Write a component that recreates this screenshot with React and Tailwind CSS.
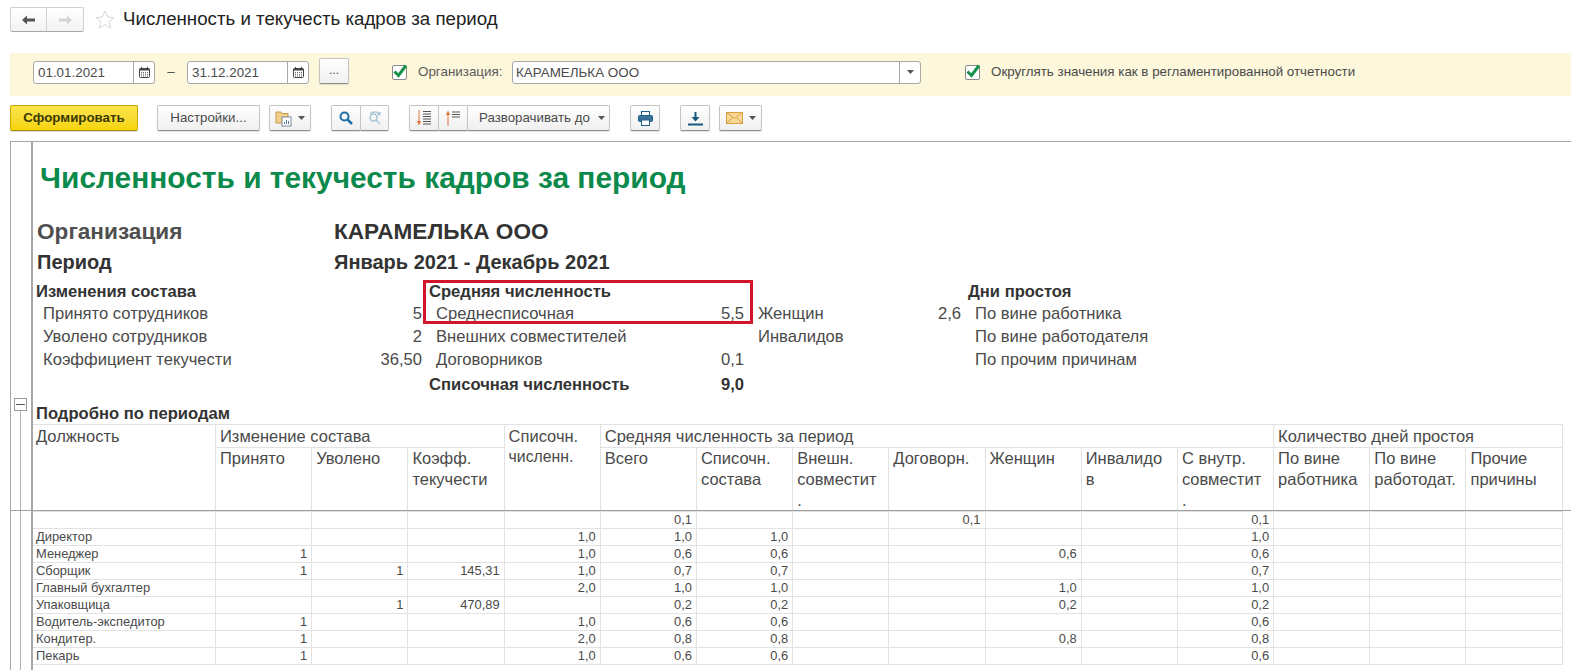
const FONT = "font-['Liberation_Sans',Arial,sans-serif]";

function Btn({ className = "", children }) {
  return (
    <div className={"flex items-center justify-center h-[26px] rounded-[2px] border border-[#c4c4c4] border-b-[#8f8f8f] bg-gradient-to-b from-white to-[#f0f0f0] shadow-[0_1px_1px_rgba(0,0,0,0.12)] text-[#4a4a4a] " + className}>
      {children}
    </div>
  );
}

const Caret = ({ className = "" }) => (
  <svg width="7" height="4" viewBox="0 0 7 4" className={className}><path d="M0 0h7L3.5 4z" fill="#555" /></svg>
);

const Cal = () => (
  <svg width="11" height="11" viewBox="0 0 11 11">
    <rect x="0.5" y="1.5" width="10" height="9" rx="1" fill="#fff" stroke="#444" />
    <rect x="0.5" y="1.5" width="10" height="2" fill="#444" />
    <path d="M2.5 0v2M8.5 0v2" stroke="#444" />
    <path d="M2 5.5h7M2 7.3h7M2 9h7" stroke="#666" strokeDasharray="1 1" />
  </svg>
);

const Check = () => (
  <div className="relative w-[15px] h-[15px] border border-[#8a8a8a] rounded-[2px] bg-white shrink-0">
    <svg width="17" height="16" viewBox="0 0 17 16" className="absolute left-[-1px] top-[-3px]">
      <path d="M2.5 8.5l4 4L14 2.5" fill="none" stroke="#16924a" strokeWidth="3" />
    </svg>
  </div>
);

function DateInput({ value }) {
  return (
    <div className="flex w-[122px] h-[23px] rounded-[3px] border border-[#a8a8a8] bg-white">
      <div className="flex-1 pl-[4px] text-[13.4px] leading-[21px] text-[#4a4a4a]">{value}</div>
      <div className="w-[21px] border-l border-[#a8a8a8] flex items-center justify-center"><Cal /></div>
    </div>
  );
}

const COLS = [182.5, 96.2, 96.2, 96.2, 96.2, 96.2, 96.2, 96.2, 96.2, 96.2, 96.2, 96.2, 96.2, 96.2, 96.2];

const ROWS = [
  ["", "", "", "", "", "0,1", "", "", "0,1", "", "", "0,1", "", "", ""],
  ["Директор", "", "", "", "1,0", "1,0", "1,0", "", "", "", "", "1,0", "", "", ""],
  ["Менеджер", "1", "", "", "1,0", "0,6", "0,6", "", "", "0,6", "", "0,6", "", "", ""],
  ["Сборщик", "1", "1", "145,31", "1,0", "0,7", "0,7", "", "", "", "", "0,7", "", "", ""],
  ["Главный бухгалтер", "", "", "", "2,0", "1,0", "1,0", "", "", "1,0", "", "1,0", "", "", ""],
  ["Упаковщица", "", "1", "470,89", "", "0,2", "0,2", "", "", "0,2", "", "0,2", "", "", ""],
  ["Водитель-экспедитор", "1", "", "", "1,0", "0,6", "0,6", "", "", "", "", "0,6", "", "", ""],
  ["Кондитер.", "1", "", "", "2,0", "0,8", "0,8", "", "", "0,8", "", "0,8", "", "", ""],
  ["Пекарь", "1", "", "", "1,0", "0,6", "0,6", "", "", "", "", "0,6", "", "", ""],
];

const H = "border border-[#e2e2e2] align-top text-left font-normal pl-[4px] pt-[1px] text-[16.5px] leading-[20px] text-[#4a4a4a]";
const H2 = "border border-[#e2e2e2] align-top text-left font-normal pl-[4px] pt-0 text-[16.5px] leading-[21px] text-[#4a4a4a]";

function SumRow({ a, an, b, bn, c, cn, d, bold, className = "" }) {
  return (
    <div className={"flex h-[23px] items-center text-[16.6px] text-[#4a4a4a] " + className}>
      <div className="w-[386px] flex justify-between pl-[7px]"><span>{a}</span><span>{an}</span></div>
      <div className={"w-[315px] ml-[7px] flex justify-between " + (bold ? "font-bold text-[#333]" : "pl-[7px]")}><span>{b}</span><span>{bn}</span></div>
      <div className="w-[203px] ml-[14px] flex justify-between"><span>{c}</span><span>{cn}</span></div>
      <div className="ml-[14px]">{d}</div>
    </div>
  );
}

export default function App() {
  return (
    <div className={FONT + " relative h-[670px] w-[1571px] overflow-hidden bg-white"}>
      {/* Title row */}
      <div className="flex items-center h-[25px] mt-[7px] ml-[10px]">
        <div className="flex w-[74px] h-[25px] rounded-[2px] border border-[#d0d0d0] border-b-[#a8a8a8] bg-gradient-to-b from-white to-[#f3f3f3]">
          <div className="w-[37px] flex items-center justify-center border-r border-[#d0d0d0]">
            <svg width="13" height="10" viewBox="0 0 13 10"><path d="M0 5l5-4.5V3.5h8v3H5v3z" fill="#555" /></svg>
          </div>
          <div className="w-[37px] flex items-center justify-center">
            <svg width="13" height="10" viewBox="0 0 13 10"><path d="M13 5L8 .5V3.5H0v3h8v3z" fill="#d4d4d4" /></svg>
          </div>
        </div>
        <svg width="20" height="19" viewBox="0 0 20 19" className="ml-[11px]">
          <path d="M10 1l2.7 6 6.3.6-4.8 4.2 1.500 6.200L10 14.7 4.3 18l1.500-6.200L1 7.600l6.300-.6z" fill="#fff" stroke="#d8d8d8" />
        </svg>
        <div className="ml-[8px] text-[18.7px] text-[#222]">Численность и текучесть кадров за период</div>
      </div>

      {/* Filter bar */}
      <div className="flex items-center h-[43px] mt-[21px] ml-[10px] pb-[5px] bg-[#fdf8dc] text-[13.4px] text-[#4a4a4a]">
        <div className="ml-[23px]"><DateInput value="01.01.2021" /></div>
        <div className="w-[32px] text-center">–</div>
        <DateInput value="31.12.2021" />
        <Btn className="ml-[10px] mb-[2px] w-[30px] text-[12px] pb-[2px]">...</Btn>
        <div className="ml-[43px]"><Check /></div>
        <div className="ml-[11px] w-[94px] text-[#5a5a5a]">Организация:</div>
        <div className="flex w-[409px] h-[23px] rounded-[3px] border border-[#a8a8a8] bg-white">
          <div className="flex-1 pl-[3px] leading-[21px]">КАРАМЕЛЬКА ООО</div>
          <div className="w-[21px] border-l border-[#a8a8a8] flex items-center justify-center"><Caret /></div>
        </div>
        <div className="ml-[44px]"><Check /></div>
        <div className="ml-[11px] text-[13.35px]">Округлять значения как в регламентированной отчетности</div>
      </div>

      {/* Toolbar */}
      <div className="flex items-center mt-[9px] ml-[10px] text-[13.3px]">
        <div className="flex items-center justify-center w-[128px] h-[26px] rounded-[2px] border border-[#c9a800] border-b-[#a88c00] bg-gradient-to-b from-[#fbe44a] to-[#f7d400] font-bold text-[#3a3a00] shadow-[0_1px_1px_rgba(0,0,0,0.15)]">Сформировать</div>
        <Btn className="ml-[19px] w-[103px]">Настройки...</Btn>
        <Btn className="ml-[9px] w-[42px] gap-[6px]">
          <svg width="17" height="18" viewBox="0 0 17 18">
            <path d="M1 3h5l1 1.500h6V14H1z" fill="#f3cf8a" stroke="#c8964a" />
            <rect x="7" y="8" width="9" height="9" fill="#fff" stroke="#7a8a9a" />
            <path d="M9.500 15v-2M11.500 15v-4M13.500 15v-3" stroke="#4a78a8" />
          </svg>
          <Caret />
        </Btn>
        <div className="ml-[20px] flex">
          <Btn className="w-[30px]">
            <svg width="14" height="14" viewBox="0 0 14 14"><circle cx="5.500" cy="5.500" r="4" fill="none" stroke="#1f6fa8" strokeWidth="2" /><path d="M8.500 8.500L13 13" stroke="#1f6fa8" strokeWidth="2.500" /></svg>
          </Btn>
          <Btn className="w-[29px] -ml-px">
            <svg width="14" height="14" viewBox="0 0 14 14"><circle cx="5.500" cy="6.500" r="3.500" fill="none" stroke="#a8c4d4" strokeWidth="1.500" /><path d="M8 9l4 4M2 2.500C5 .5 9 .5 12 3M12 1v2.500H9.500" fill="none" stroke="#a8c4d4" strokeWidth="1.300" /></svg>
          </Btn>
        </div>
        <div className="ml-[20px] flex">
          <Btn className="w-[30px]">
            <svg width="16" height="16" viewBox="0 0 16 16">
              <path d="M3 0v13" stroke="#e0783c" /><path d="M.8 11L3 15.500 5.200 11z" fill="#e0783c" />
              <path d="M7 1.500h8M7 4h8M7 6.500h8M7 9h8M7 11.500h8M7 14h8" stroke="#555" />
            </svg>
          </Btn>
          <Btn className="w-[30px] -ml-px">
            <svg width="16" height="16" viewBox="0 0 16 16">
              <path d="M3 3v13" stroke="#e0783c" /><path d="M.8 5L3 .5 5.200 5z" fill="#e0783c" />
              <path d="M7 2h8M7 4.500h8M7 7h8" stroke="#555" />
            </svg>
          </Btn>
          <Btn className="w-[143px] -ml-px !justify-start pl-[11px] gap-[8px]"><span>Разворачивать до</span><Caret /></Btn>
        </div>
        <Btn className="ml-[20px] w-[30px]">
          <svg width="15" height="15" viewBox="0 0 15 15">
            <rect x="3.500" y="0.500" width="8" height="4" fill="#fff" stroke="#1f5f88" />
            <rect x="0.500" y="4.500" width="14" height="6" rx="1" fill="#3a7398" stroke="#1f5f88" />
            <rect x="3.500" y="9" width="8" height="5.500" fill="#fff" stroke="#1f5f88" />
          </svg>
        </Btn>
        <Btn className="ml-[20px] w-[30px]">
          <svg width="15" height="15" viewBox="0 0 15 15">
            <path d="M7.500 1v6" stroke="#14597f" strokeWidth="2" /><path d="M3.500 6h8l-4 4.500z" fill="#14597f" /><path d="M0 13.500h15" stroke="#14597f" strokeWidth="2" />
          </svg>
        </Btn>
        <Btn className="ml-[9px] w-[43px] gap-[6px]">
          <svg width="17" height="12" viewBox="0 0 17 12">
            <rect x="0.500" y="0.500" width="16" height="11" fill="#f7d896" stroke="#d8a040" />
            <path d="M.5.500l8 6 8-6M.5 11.500l6-6M16.500 11.500l-6-6" fill="none" stroke="#d8a040" />
          </svg>
          <Caret />
        </Btn>
      </div>

      {/* Report */}
      <div className="relative flex h-[529px] mt-[10px] ml-[10px] border-l border-t border-[#a6a6a6]">
        <div className="w-[20px] flex flex-col shrink-0">
          <div className="h-[256px] shrink-0" />
          <div className="ml-[3px] w-[13px] h-[13px] border border-[#9a9a9a] bg-white flex items-center justify-center shrink-0">
            <div className="w-[9px] h-px bg-[#555]" />
          </div>
          <div className="ml-[9px] w-px flex-1 bg-[#b0b0b0]" />
        </div>
        <div className="flex-1 border-l-2 border-[#a6a6a6]">
          <div className="h-[70px] flex items-center pt-[2px] pl-[7px] text-[29.9px] font-bold text-[#0c8a4c]">Численность и текучесть кадров за период</div>
          <div className="h-[36px] flex items-center pt-[3px] pl-[4px] text-[22.6px] font-bold text-[#4f4f4f]">
            <div className="w-[297px]">Организация</div>
            <div className="text-[#333]">КАРАМЕЛЬКА ООО</div>
          </div>
          <div className="h-[28px] flex items-center pl-[4px] text-[20px] font-bold text-[#333]">
            <div className="w-[297px]">Период</div>
            <div>Январь 2021 - Декабрь 2021</div>
          </div>
          <div className="mt-[6px] pl-[3px]">
            <div className="flex h-[21px] items-center text-[16.6px] font-bold text-[#333]">
              <div className="w-[386px]">Изменения состава</div>
              <div className="w-[315px] ml-[7px]">Средняя численность</div>
              <div className="w-[203px] ml-[14px]" />
              <div className="ml-[7px]">Дни простоя</div>
            </div>
            <SumRow a="Принято сотрудников" an="5" b="Среднесписочная" bn="5,5" c="Женщин" cn="2,6" d="По вине работника" />
            <SumRow a="Уволено сотрудников" an="2" b="Внешних совместителей" c="Инвалидов" d="По вине работодателя" />
            <SumRow a="Коэффициент текучести" an="36,50" b="Договорников" bn="0,1" d="По прочим причинам" />
            <SumRow b="Списочная численность" bn="9,0" bold className="mt-[2px]" />
          </div>
          <div className="mt-[7px] h-[20px] flex items-center pl-[3px] text-[16.6px] font-bold text-[#333]">Подробно по периодам</div>
          <table className="table-fixed border-collapse w-[1529.3px]">
            <colgroup>{COLS.map((w, i) => <col key={i} style={{ width: w }} />)}</colgroup>
            <thead>
              <tr className="h-[23px]">
                <th rowSpan={2} className={H + " !pl-[3px] border-l-0"}>Должность</th>
                <th colSpan={3} className={H}>Изменение состава</th>
                <th rowSpan={2} className={H}>Списочн.<br /><span className="text-[15.8px]">численн.</span></th>
                <th colSpan={7} className={H}>Средняя численность за период</th>
                <th colSpan={3} className={H}>Количество дней простоя</th>
              </tr>
              <tr className="h-[64px]">
                <th className={H2}>Принято</th>
                <th className={H2}>Уволено</th>
                <th className={H2}>Коэфф.<br />текучести</th>
                <th className={H2}>Всего</th>
                <th className={H2}>Списочн.<br />состава</th>
                <th className={H2}>Внешн.<br />совместит<br />.</th>
                <th className={H2}>Договорн.</th>
                <th className={H2}>Женщин</th>
                <th className={H2}>Инвалидо<br />в</th>
                <th className={H2}>С внутр.<br />совместит<br />.</th>
                <th className={H2}>По вине<br />работника</th>
                <th className={H2}>По вине<br />работодат.</th>
                <th className={H2}>Прочие<br />причины</th>
              </tr>
            </thead>
            <tbody>
              {ROWS.map((r, i) => (
                <tr key={i} className="h-[17px]">
                  {r.map((v, j) => (
                    <td key={j} className={"border border-[#e2e2e2] p-0 text-[12.9px] leading-[16px] text-[#4a4a4a] " + (j === 0 ? "pl-[3px] border-l-0 text-left" : "pr-[4px] text-right")}>{v}</td>
                  ))}
                </tr>
              ))}
            </tbody>
          </table>
        </div>
        {/* section divider crossing the rail and the table */}
        <div className="absolute left-0 right-0 top-[368px] h-px bg-[#a0a0a0]" />
        {/* red highlight */}
        <div className="absolute left-[412px] top-[138px] w-[330px] h-[44px] border-[3px] border-[#d2152b]" />
      </div>
    </div>
  );
}
